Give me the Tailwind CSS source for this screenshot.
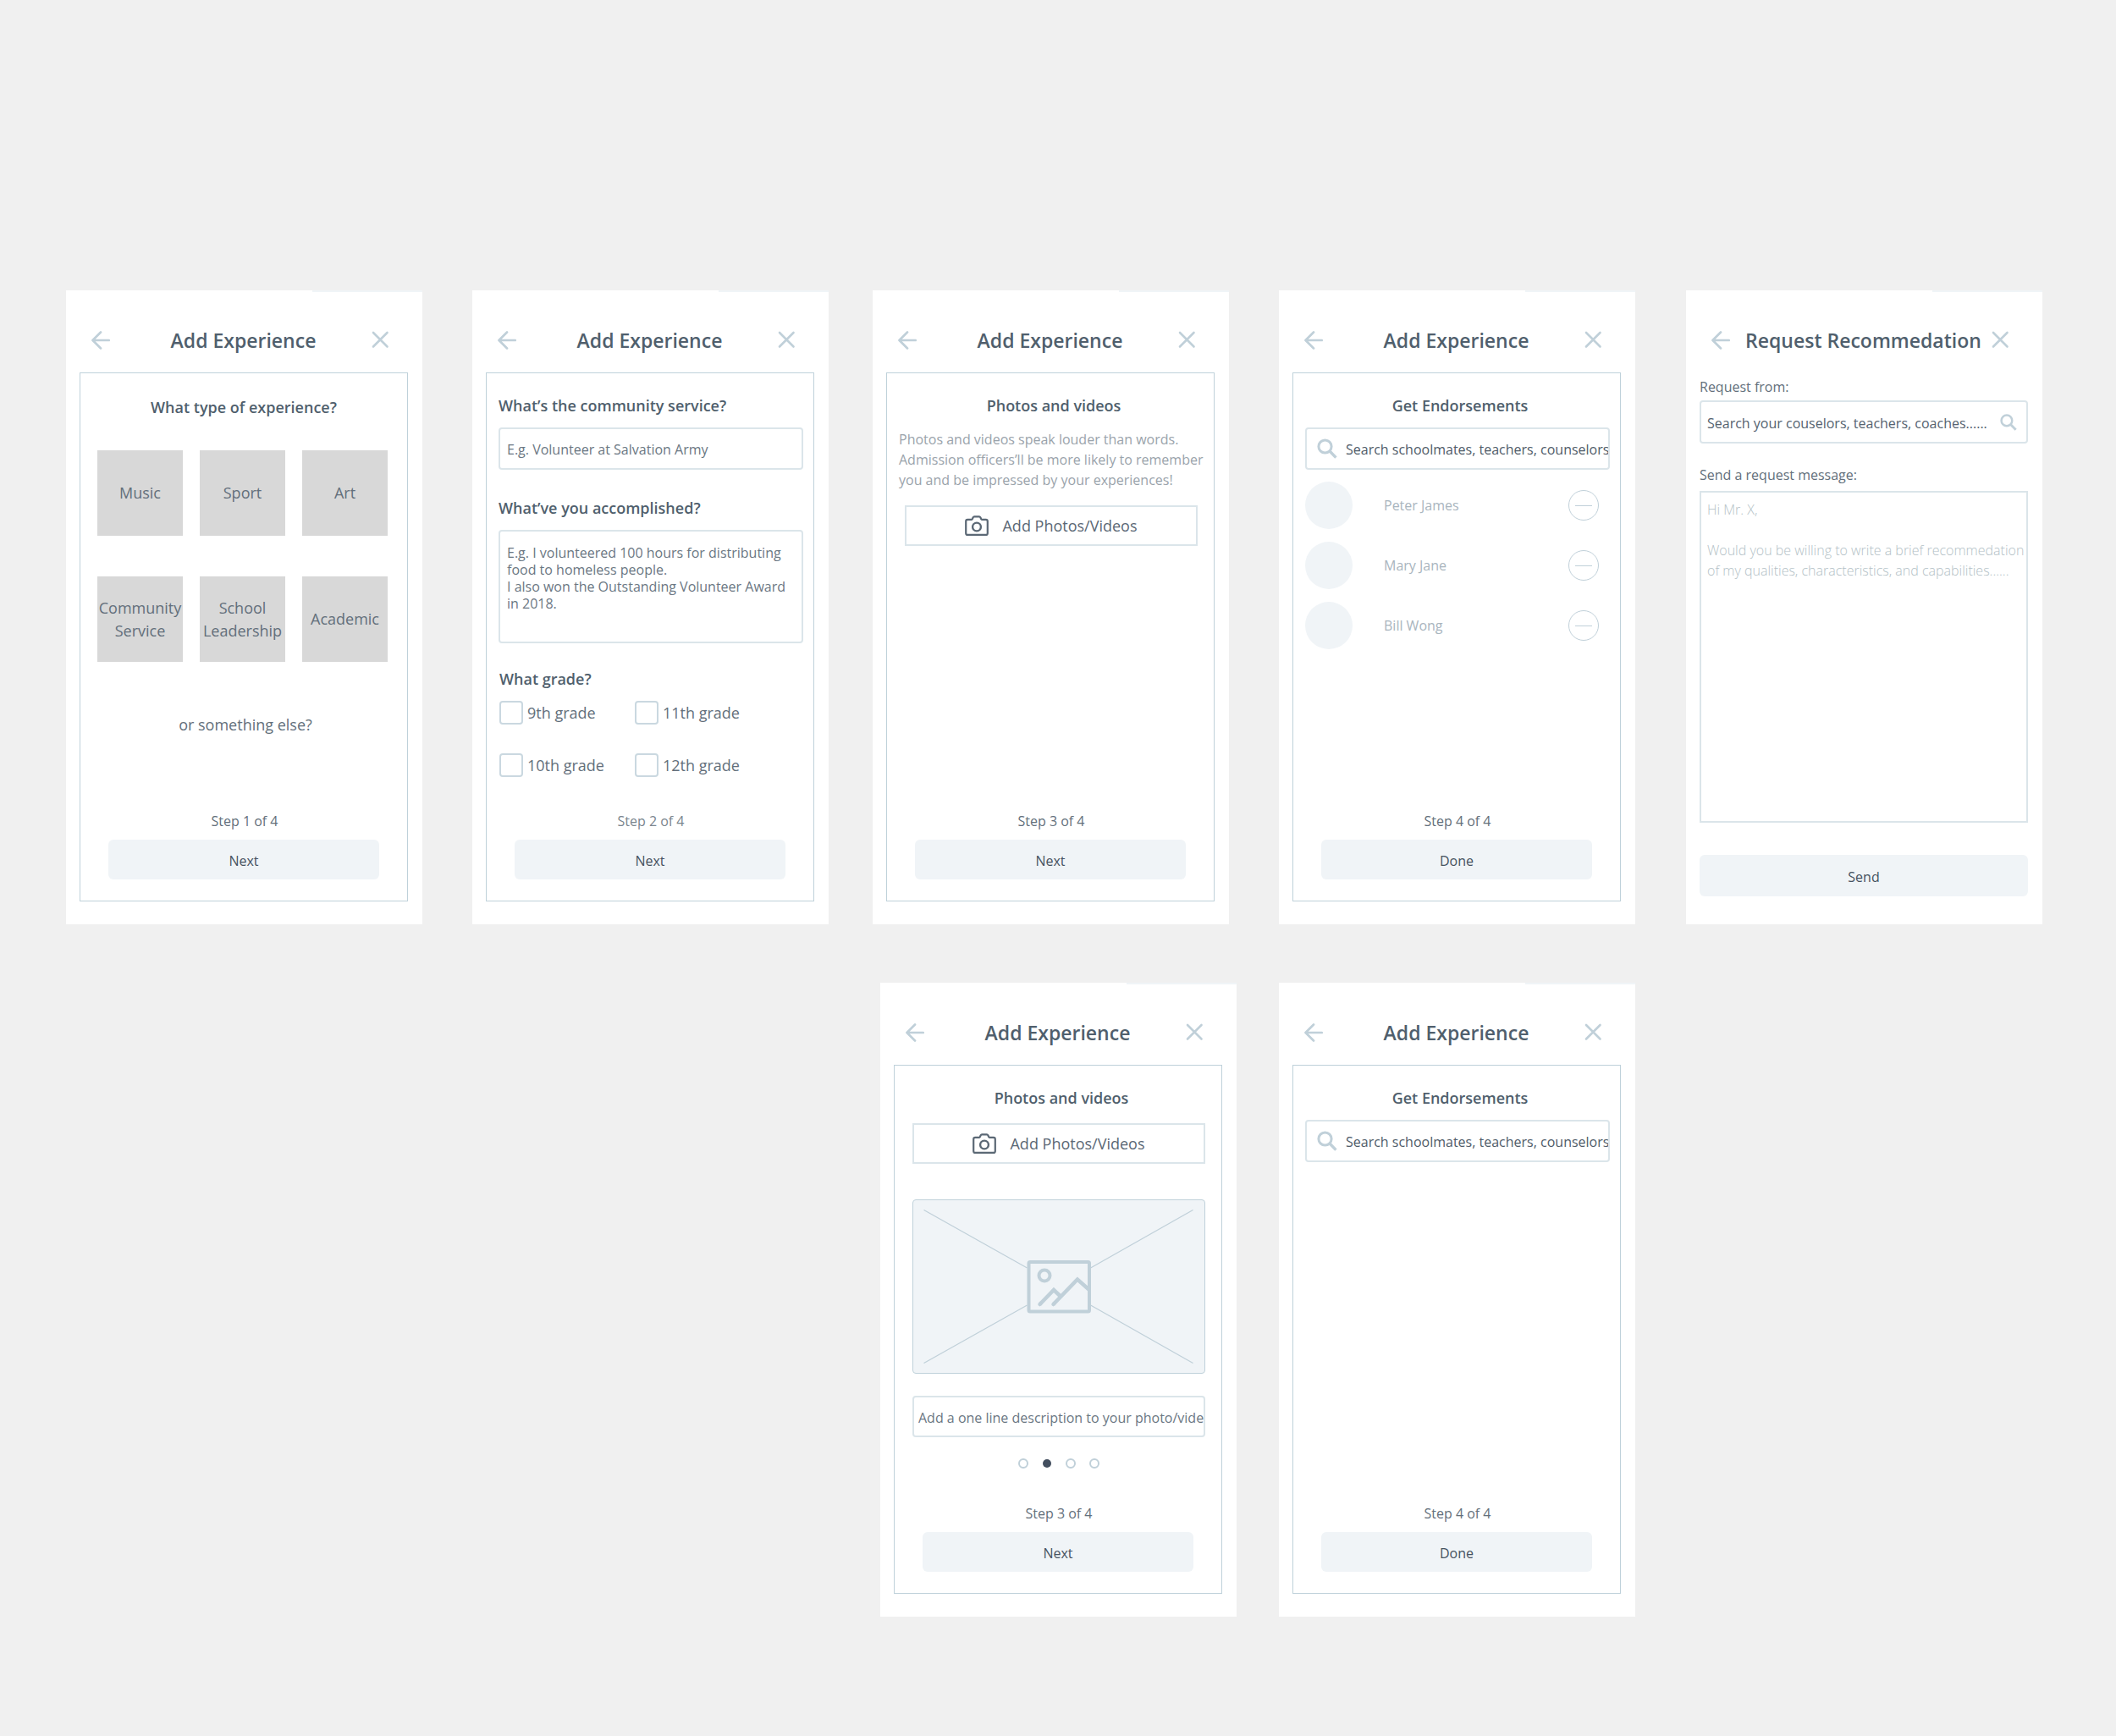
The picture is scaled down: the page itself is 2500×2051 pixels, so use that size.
<!DOCTYPE html>
<html lang="en">
<head>
  <meta charset="UTF-8">
  <meta name="viewport" content="width=device-width,initial-scale=1">
  <title>Add Experience · Wireframes</title>
  <script src="https://cdn.jsdelivr.net/npm/@tailwindcss/browser@4"></script>
</head>
<body class="min-h-screen bg-[#f0f0f0] pt-[343px] font-['Open_Sans',sans-serif] text-base leading-6 text-[#636f7b] antialiased">

<!-- ICONS -->
<svg class="hidden" xmlns="http://www.w3.org/2000/svg">
  <symbol id="back" viewBox="0 0 22 22">
    <path d="M20.7 11H1.6M11 1.5L1.5 11l9.500 9.500" fill="none" stroke="currentColor" stroke-width="2.700" stroke-linecap="round" stroke-linejoin="round"/>
  </symbol>
  <symbol id="close" viewBox="0 0 22 22">
    <path d="M2 2l16.500 16.500M18.500 2L2 18.500" fill="none" stroke="currentColor" stroke-width="2.600" stroke-linecap="round"/>
  </symbol>
  <symbol id="search" viewBox="0 0 24 24">
    <circle cx="9.500" cy="9.500" r="7.600" fill="none" stroke="currentColor" stroke-width="3"/>
    <path d="M15 15l7.400 7.600" fill="none" stroke="currentColor" stroke-width="3.400"/>
  </symbol>
  <symbol id="camera" viewBox="0 0 28 24">
    <path d="M3.200 4.900h4.300c.6 0 1-.3 1.300-.8l.9-1.800c.3-.6.8-.9 1.400-.9h5.800c.6 0 1.100.3 1.400.9l.9 1.800c.3.5.7.8 1.300.8h4.300c1.100 0 2 .9 2 2v14c0 1.100-.9 2-2 2H3.200c-1.100 0-2-.9-2-2v-14c0-1.100.9-2 2-2z" fill="none" stroke="currentColor" stroke-width="2.200"/>
    <circle cx="14" cy="13.500" r="4.900" fill="none" stroke="currentColor" stroke-width="2.400"/>
  </symbol>
</svg>

<!-- ROW 1 -->
<main class="grid grid-cols-[78fr_421fr_59fr_421fr_52fr_421fr_59fr_421fr_60fr_421fr_87fr]">

  <!-- STEP 1 -->
  <section class="col-start-2 flex min-h-[749px] min-w-0 flex-col bg-white pb-[27px]">
    <div class="-mb-0.5 ml-auto h-0.5 w-[130px] bg-[#f0f4f7]"></div>
    <header class="flex h-[97px] items-center pt-5 pr-[38px] pl-[30px]">
      <button type="button" aria-label="Back" class="w-7 text-[#c0d0d9]"><svg class="size-[22px]"><use href="#back"/></svg></button>
      <h1 class="flex-1 text-center text-[23px] font-semibold whitespace-nowrap text-[#505f6d]">Add Experience</h1>
      <button type="button" aria-label="Close" class="text-[#c0d0d9]"><svg class="size-[22px]"><use href="#close"/></svg></button>
    </header>
    <form class="mr-[17px] ml-4 flex flex-1 flex-col border border-[#bfd1da] pt-7 pb-[25px]">
      <h2 class="text-center text-lg leading-6 font-semibold text-[#505f6d]">What type of experience?</h2>
      <div class="mt-[39px] mr-[23px] ml-5 grid grid-cols-3 gap-x-5 gap-y-12 text-lg leading-[27px]">
        <button type="button" class="h-[101px] bg-[#d8d8d8]">Music</button>
        <button type="button" class="h-[101px] bg-[#d8d8d8]">Sport</button>
        <button type="button" class="h-[101px] bg-[#d8d8d8]">Art</button>
        <button type="button" class="h-[101px] bg-[#d8d8d8]">Community Service</button>
        <button type="button" class="h-[101px] bg-[#d8d8d8]">School Leadership</button>
        <button type="button" class="h-[101px] bg-[#d8d8d8]">Academic</button>
      </div>
      <a href="#" class="mt-[62px] pl-1 text-center text-lg leading-6">or something else?</a>
      <p class="mt-auto pl-0.5 text-center">Step 1 of 4</p>
      <button type="button" class="mx-[33px] mt-2.5 h-[47px] rounded-md bg-[#f0f4f7] pt-0.5 font-medium text-[#465260]">Next</button>
    </form>
  </section>

  <!-- STEP 2 -->
  <section class="col-start-4 flex min-h-[749px] min-w-0 flex-col bg-white pb-[27px]">
    <div class="-mb-0.5 ml-auto h-0.5 w-[130px] bg-[#f0f4f7]"></div>
    <header class="flex h-[97px] items-center pt-5 pr-[38px] pl-[30px]">
      <button type="button" aria-label="Back" class="w-7 text-[#c0d0d9]"><svg class="size-[22px]"><use href="#back"/></svg></button>
      <h1 class="flex-1 text-center text-[23px] font-semibold whitespace-nowrap text-[#505f6d]">Add Experience</h1>
      <button type="button" aria-label="Close" class="text-[#c0d0d9]"><svg class="size-[22px]"><use href="#close"/></svg></button>
    </header>
    <form class="mr-[17px] ml-4 flex flex-1 flex-col border border-[#bfd1da] pt-[26px] pb-[25px]">
      <div class="flex flex-col pr-3 pl-3.5">
        <label for="service" class="text-lg leading-6 font-semibold text-[#505f6d]">What’s the community service?</label>
        <input id="service" type="text" placeholder="E.g. Volunteer at Salvation Army"
               class="mt-3.5 h-[50px] rounded border-2 border-[#dbe5ea] px-2 pt-0.5 placeholder:text-[#6b7783]">
        <label for="accomplished" class="mt-[33px] text-lg leading-6 font-semibold text-[#505f6d]">What’ve you accomplished?</label>
        <textarea id="accomplished" placeholder="E.g. I volunteered 100 hours for distributing&#10;food to homeless people.&#10;I also won the Outstanding Volunteer Award&#10;in 2018."
                  class="mt-3.5 h-[134px] resize-none rounded border-2 border-[#dbe5ea] px-2 pt-[15px] leading-5 placeholder:text-[#6b7783]"></textarea>
        <fieldset class="mt-[30px] pl-px">
          <legend class="text-lg leading-6 font-semibold text-[#505f6d]">What grade?</legend>
          <div class="mt-3.5 grid grid-cols-[160px_1fr] gap-y-[34px] text-lg leading-7">
            <label class="flex gap-[5px]"><input type="checkbox" class="size-7 appearance-none rounded border-2 border-[#cad8e0] bg-white">9th grade</label>
            <label class="flex gap-[5px]"><input type="checkbox" class="size-7 appearance-none rounded border-2 border-[#cad8e0] bg-white">11th grade</label>
            <label class="flex gap-[5px]"><input type="checkbox" class="size-7 appearance-none rounded border-2 border-[#cad8e0] bg-white">10th grade</label>
            <label class="flex gap-[5px]"><input type="checkbox" class="size-7 appearance-none rounded border-2 border-[#cad8e0] bg-white">12th grade</label>
          </div>
        </fieldset>
      </div>
      <p class="mt-auto pl-0.5 text-center text-[#7a858e]">Step 2 of 4</p>
      <button type="button" class="mx-[33px] mt-2.5 h-[47px] rounded-md bg-[#f0f4f7] pt-0.5 font-medium text-[#465260]">Next</button>
    </form>
  </section>

  <!-- STEP 3 -->
  <section class="col-start-6 flex min-h-[749px] min-w-0 flex-col bg-white pb-[27px]">
    <div class="-mb-0.5 ml-auto h-0.5 w-[130px] bg-[#f0f4f7]"></div>
    <header class="flex h-[97px] items-center pt-5 pr-[38px] pl-[30px]">
      <button type="button" aria-label="Back" class="w-7 text-[#c0d0d9]"><svg class="size-[22px]"><use href="#back"/></svg></button>
      <h1 class="flex-1 text-center text-[23px] font-semibold whitespace-nowrap text-[#505f6d]">Add Experience</h1>
      <button type="button" aria-label="Close" class="text-[#c0d0d9]"><svg class="size-[22px]"><use href="#close"/></svg></button>
    </header>
    <form class="mr-[17px] ml-4 flex flex-1 flex-col border border-[#bfd1da] pt-[26px] pb-[25px]">
      <div class="flex flex-col pr-3 pl-3.5">
        <h2 class="pl-1.5 text-center text-lg leading-6 font-semibold text-[#505f6d]">Photos and videos</h2>
        <p class="mt-4 whitespace-nowrap text-[#9aa3ab]">Photos and videos speak louder than words.<br>Admission officers’ll be more likely to remember<br>you and be impressed by your experiences!</p>
        <button type="button" class="mx-[7px] mt-[18px] flex h-12 items-center justify-center gap-4 border-2 border-[#dbe5ea] text-lg text-[#5b6875]">
          <svg class="h-6 w-7"><use href="#camera"/></svg>Add Photos/Videos
        </button>
      </div>
      <p class="mt-auto pl-0.5 text-center">Step 3 of 4</p>
      <button type="button" class="mx-[33px] mt-2.5 h-[47px] rounded-md bg-[#f0f4f7] pt-0.5 font-medium text-[#465260]">Next</button>
    </form>
  </section>

  <!-- STEP 4 -->
  <section class="col-start-8 flex min-h-[749px] min-w-0 flex-col bg-white pb-[27px]">
    <div class="-mb-0.5 ml-auto h-0.5 w-[130px] bg-[#f0f4f7]"></div>
    <header class="flex h-[97px] items-center pt-5 pr-[38px] pl-[30px]">
      <button type="button" aria-label="Back" class="w-7 text-[#c0d0d9]"><svg class="size-[22px]"><use href="#back"/></svg></button>
      <h1 class="flex-1 text-center text-[23px] font-semibold whitespace-nowrap text-[#505f6d]">Add Experience</h1>
      <button type="button" aria-label="Close" class="text-[#c0d0d9]"><svg class="size-[22px]"><use href="#close"/></svg></button>
    </header>
    <form class="mr-[17px] ml-4 flex flex-1 flex-col border border-[#bfd1da] pt-[26px] pb-[25px]">
      <div class="flex flex-col pr-3 pl-3.5">
        <h2 class="pl-1.5 text-center text-lg leading-6 font-semibold text-[#505f6d]">Get Endorsements</h2>
        <label class="mt-3.5 flex h-[50px] items-center gap-2.5 rounded border-2 border-[#dbe5ea] pl-3 text-[#c0d0d9]">
          <svg class="size-6 shrink-0"><use href="#search"/></svg>
          <input type="text" aria-label="Search endorsers" placeholder="Search schoolmates, teachers, counselors"
                 class="h-full min-w-0 flex-1 pt-0.5 text-[#505c69] placeholder:text-[#505c69]">
        </label>
        <ul class="mt-3.5 flex flex-col gap-[15px] text-[#a9b5be]">
          <li class="flex items-center pr-[13px]">
            <span class="mr-[37px] size-14 rounded-full bg-[#f0f4f7]"></span>
            <span class="flex-1">Peter James</span>
            <button type="button" aria-label="Remove Peter James" class="flex size-9 items-center justify-center rounded-full border border-[#c0d0d9]"><span class="h-px w-5 bg-[#c0d0d9]"></span></button>
          </li>
          <li class="flex items-center pr-[13px]">
            <span class="mr-[37px] size-14 rounded-full bg-[#f0f4f7]"></span>
            <span class="flex-1">Mary Jane</span>
            <button type="button" aria-label="Remove Mary Jane" class="flex size-9 items-center justify-center rounded-full border border-[#c0d0d9]"><span class="h-px w-5 bg-[#c0d0d9]"></span></button>
          </li>
          <li class="flex items-center pr-[13px]">
            <span class="mr-[37px] size-14 rounded-full bg-[#f0f4f7]"></span>
            <span class="flex-1">Bill Wong</span>
            <button type="button" aria-label="Remove Bill Wong" class="flex size-9 items-center justify-center rounded-full border border-[#c0d0d9]"><span class="h-px w-5 bg-[#c0d0d9]"></span></button>
          </li>
        </ul>
      </div>
      <p class="mt-auto pl-0.5 text-center">Step 4 of 4</p>
      <button type="button" class="mx-[33px] mt-2.5 h-[47px] rounded-md bg-[#f0f4f7] pt-0.5 font-medium text-[#465260]">Done</button>
    </form>
  </section>

  <!-- REQUEST RECOMMENDATION -->
  <section class="col-start-10 flex min-h-[749px] min-w-0 flex-col bg-white pb-[33px]">
    <div class="-mb-0.5 ml-auto h-0.5 w-[130px] bg-[#f0f4f7]"></div>
    <header class="flex h-[97px] items-center pt-5 pr-[38px] pl-[30px]">
      <button type="button" aria-label="Back" class="w-7 text-[#c0d0d9]"><svg class="size-[22px]"><use href="#back"/></svg></button>
      <h1 class="flex-1 text-center text-[23px] font-semibold whitespace-nowrap text-[#505f6d]">Request Recommedation</h1>
      <button type="button" aria-label="Close" class="text-[#c0d0d9]"><svg class="size-[22px]"><use href="#close"/></svg></button>
    </header>
    <form class="mr-[17px] ml-4 flex flex-1 flex-col pt-[5px]">
      <label for="from">Request from:</label>
      <div class="mt-1 flex h-[51px] items-center rounded border-2 border-[#dbe5ea] pr-[11px] pl-[7px] text-[#c0d0d9]">
        <input id="from" type="text" placeholder="Search your couselors, teachers, coaches......"
               class="h-full min-w-0 flex-1 pt-0.5 text-[#55626f] placeholder:text-[#55626f]">
        <svg class="size-5 shrink-0"><use href="#search"/></svg>
      </div>
      <label for="message" class="mt-[25px]">Send a request message:</label>
      <textarea id="message" placeholder="Hi Mr. X,&#10;&#10;Would you be willing to write a brief recommedation&#10;of my qualities, characteristics, and capabilities......"
                class="mt-[7px] min-h-[392px] flex-1 resize-none overflow-hidden border-2 border-[#dbe5ea] pt-2 pl-[7px] font-light whitespace-pre placeholder:text-[#b3bfc6]"></textarea>
      <button type="button" class="mt-[38px] h-[49px] rounded-md bg-[#f0f4f7] pt-0.5 font-medium text-[#465260]">Send</button>
    </form>
  </section>
</main>

<!-- ROW 2 -->
<div class="mt-[69px] grid grid-cols-[1040fr_421fr_50fr_421fr_568fr]">

  <!-- STEP 3, PHOTO ADDED -->
  <section class="col-start-2 flex min-h-[749px] min-w-0 flex-col bg-white pb-[27px]">
    <div class="-mb-0.5 ml-auto h-0.5 w-[130px] bg-[#f0f4f7]"></div>
    <header class="flex h-[97px] items-center pt-5 pr-[38px] pl-[30px]">
      <button type="button" aria-label="Back" class="w-7 text-[#c0d0d9]"><svg class="size-[22px]"><use href="#back"/></svg></button>
      <h1 class="flex-1 text-center text-[23px] font-semibold whitespace-nowrap text-[#505f6d]">Add Experience</h1>
      <button type="button" aria-label="Close" class="text-[#c0d0d9]"><svg class="size-[22px]"><use href="#close"/></svg></button>
    </header>
    <form class="mr-[17px] ml-4 flex flex-1 flex-col border border-[#bfd1da] pt-[26px] pb-[25px]">
      <div class="flex flex-col pr-3 pl-3.5">
        <h2 class="pl-1.5 text-center text-lg leading-6 font-semibold text-[#505f6d]">Photos and videos</h2>
        <button type="button" class="mx-[7px] mt-[18px] flex h-12 items-center justify-center gap-4 border-2 border-[#dbe5ea] text-lg text-[#5b6875]">
          <svg class="h-6 w-7"><use href="#camera"/></svg>Add Photos/Videos
        </button>
        <div class="mx-[7px] mt-[42px] h-[206px] overflow-hidden rounded-sm border border-[#bfd1da] bg-[#f0f4f7]">
          <svg viewBox="0 0 343 204" class="h-full w-full text-[#c0d0d9]" fill="none" stroke="currentColor">
            <path d="M12 11.500L134 80M330 11.500L209 80M12 192.500L134 124M330 192.500L209 124" stroke-width="1.300"/>
            <rect x="136" y="73" width="71.500" height="58.500" rx="1.500" stroke-width="4"/>
            <circle cx="154.500" cy="89" r="6.500" stroke-width="4"/>
            <path d="M149 123l16.500-17 8.500 8M165 123l28.500-29.500 14 12.500" stroke-width="4.500"/>
            <path d="M149 123l1-1M165 123l1-1" stroke-width="4.500" stroke-linecap="round"/>
          </svg>
        </div>
        <input type="text" aria-label="Description" placeholder="Add a one line description to your photo/video"
               class="mx-[7px] mt-[26px] h-[49px] rounded border-2 border-[#dbe5ea] pt-0.5 pl-[5px] placeholder:text-[#6b7783]">
        <div class="mt-[25px] flex items-center justify-center gap-4">
          <span class="size-3 rounded-full border-2 border-[#c0d0d9]"></span>
          <span class="mx-px size-2.5 rounded-full bg-[#434f5f]"></span>
          <span class="size-3 rounded-full border-2 border-[#c0d0d9]"></span>
          <span class="size-3 rounded-full border-2 border-[#c0d0d9]"></span>
        </div>
      </div>
      <p class="mt-auto pl-0.5 text-center">Step 3 of 4</p>
      <button type="button" class="mx-[33px] mt-2.5 h-[47px] rounded-md bg-[#f0f4f7] pt-0.5 font-medium text-[#465260]">Next</button>
    </form>
  </section>

  <!-- STEP 4, NOBODY ADDED YET -->
  <section class="col-start-4 flex min-h-[749px] min-w-0 flex-col bg-white pb-[27px]">
    <div class="-mb-0.5 ml-auto h-0.5 w-[130px] bg-[#f0f4f7]"></div>
    <header class="flex h-[97px] items-center pt-5 pr-[38px] pl-[30px]">
      <button type="button" aria-label="Back" class="w-7 text-[#c0d0d9]"><svg class="size-[22px]"><use href="#back"/></svg></button>
      <h1 class="flex-1 text-center text-[23px] font-semibold whitespace-nowrap text-[#505f6d]">Add Experience</h1>
      <button type="button" aria-label="Close" class="text-[#c0d0d9]"><svg class="size-[22px]"><use href="#close"/></svg></button>
    </header>
    <form class="mr-[17px] ml-4 flex flex-1 flex-col border border-[#bfd1da] pt-[26px] pb-[25px]">
      <div class="flex flex-col pr-3 pl-3.5">
        <h2 class="pl-1.5 text-center text-lg leading-6 font-semibold text-[#505f6d]">Get Endorsements</h2>
        <label class="mt-3.5 flex h-[50px] items-center gap-2.5 rounded border-2 border-[#dbe5ea] pl-3 text-[#c0d0d9]">
          <svg class="size-6 shrink-0"><use href="#search"/></svg>
          <input type="text" aria-label="Search endorsers" placeholder="Search schoolmates, teachers, counselors"
                 class="h-full min-w-0 flex-1 pt-0.5 text-[#505c69] placeholder:text-[#505c69]">
        </label>
      </div>
      <p class="mt-auto pl-0.5 text-center">Step 4 of 4</p>
      <button type="button" class="mx-[33px] mt-2.5 h-[47px] rounded-md bg-[#f0f4f7] pt-0.5 font-medium text-[#465260]">Done</button>
    </form>
  </section>
</div>

</body>
</html>
